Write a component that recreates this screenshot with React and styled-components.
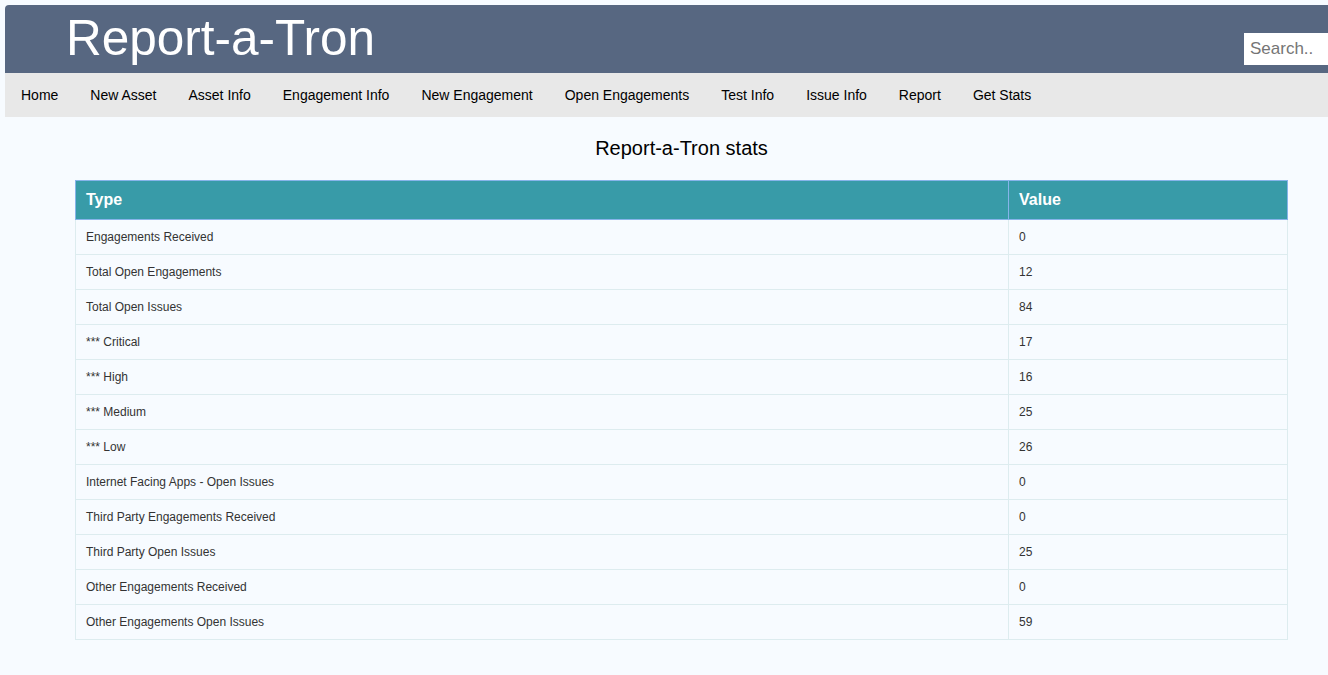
import React from 'react';
import styled, { createGlobalStyle } from 'styled-components';

const GlobalStyle = createGlobalStyle`
  html, body {
    margin: 0;
    padding: 0;
    background: #f7fbff;
    font-family: "Liberation Sans", Arial, sans-serif;
  }
  body {
    padding: 5px 0 0 5px;
    overflow: hidden;
  }
`;

const Header = styled.header`
  display: flex;
  align-items: flex-start;
  justify-content: space-between;
  height: 68px;
  background: #576781;
  border-top-left-radius: 4px;
`;

const Title = styled.h1`
  margin: 4px 0 0 61px;
  font-size: 49.5px;
  font-weight: normal;
  line-height: 58px;
  color: #ffffff;
`;

const Search = styled.input`
  margin-top: 28px;
  width: 84px;
  height: 32px;
  box-sizing: border-box;
  padding: 4px 6px;
  border: none;
  outline: none;
  font-family: "Liberation Sans", Arial, sans-serif;
  font-size: 17px;
  background: #ffffff;
  &::placeholder {
    color: #757575;
  }
`;

const Nav = styled.nav`
  display: flex;
  background: #e8e8e8;
`;

const NavLink = styled.a`
  padding: 14px 16px;
  font-size: 14px;
  line-height: 16px;
  color: #000000;
  text-decoration: none;
`;

const Main = styled.main`
  padding: 0 40px 0 70px;
`;

const Heading = styled.h2`
  margin: 20px 0 21px;
  text-align: center;
  font-size: 20px;
  font-weight: normal;
  line-height: 22px;
  color: #000000;
`;

const Table = styled.table`
  width: 1213px;
  border-collapse: collapse;
`;

const Th = styled.th`
  height: 39px;
  box-sizing: border-box;
  padding: 0 10px;
  text-align: left;
  font-size: 16px;
  font-weight: bold;
  color: #ffffff;
  background: #389ba8;
  border: 1px solid #86b4ea;
  width: ${p => p.$w || 'auto'};
`;

const Td = styled.td`
  height: 35px;
  box-sizing: border-box;
  padding: 0 10px;
  font-size: 12px;
  color: #333333;
  border: 1px solid #ddecef;
`;

const links = [
  'Home', 'New Asset', 'Asset Info', 'Engagement Info', 'New Engagement',
  'Open Engagements', 'Test Info', 'Issue Info', 'Report', 'Get Stats'
];

const stats = [
  ['Engagements Received', 0],
  ['Total Open Engagements', 12],
  ['Total Open Issues', 84],
  ['*** Critical', 17],
  ['*** High', 16],
  ['*** Medium', 25],
  ['*** Low', 26],
  ['Internet Facing Apps - Open Issues', 0],
  ['Third Party Engagements Received', 0],
  ['Third Party Open Issues', 25],
  ['Other Engagements Received', 0],
  ['Other Engagements Open Issues', 59],
];

export default function App() {
  return (
    <>
      <GlobalStyle />
      <Header>
        <Title>Report-a-Tron</Title>
        <Search type="text" placeholder="Search.." />
      </Header>
      <Nav>
        {links.map(l => <NavLink key={l} href="#">{l}</NavLink>)}
      </Nav>
      <Main>
        <Heading>Report-a-Tron stats</Heading>
        <Table>
          <thead>
            <tr>
              <Th>Type</Th>
              <Th $w="279px">Value</Th>
            </tr>
          </thead>
          <tbody>
            {stats.map(([type, value]) => (
              <tr key={type}>
                <Td>{type}</Td>
                <Td>{value}</Td>
              </tr>
            ))}
          </tbody>
        </Table>
      </Main>
    </>
  );
}
